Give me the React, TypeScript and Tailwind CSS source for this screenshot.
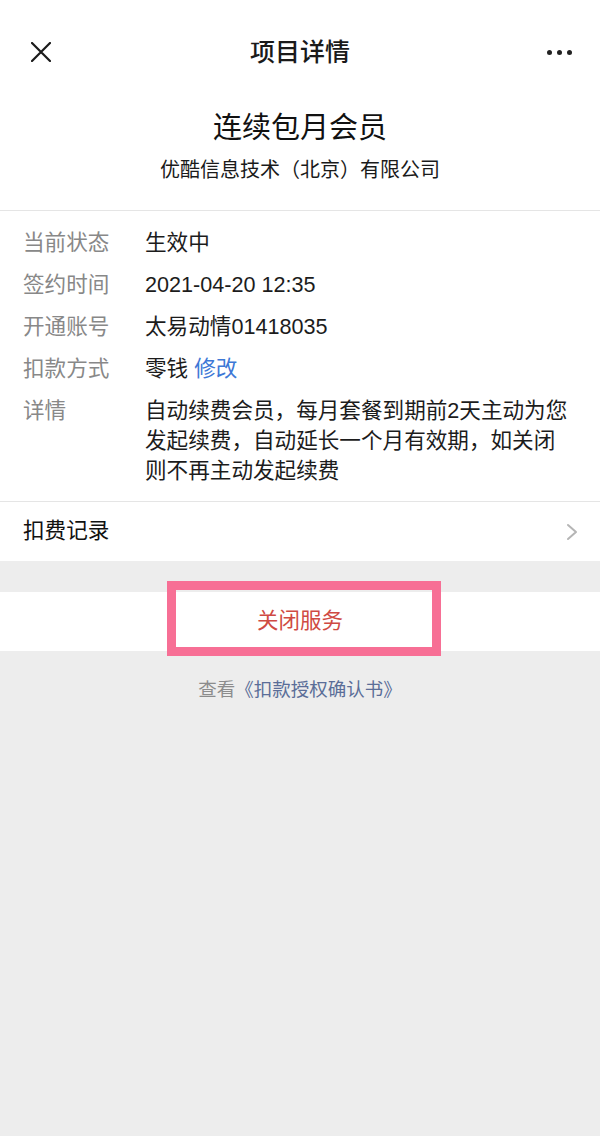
import React from "react";

const font = { fontFamily: '"Liberation Sans", "Noto Sans CJK SC", sans-serif' };

function Row({ label, children }: { label: string; children: React.ReactNode }) {
  return (
    <div className="flex">
      <div className="w-[122px] shrink-0 text-[#888888]">{label}</div>
      <div className="flex-1 text-[#1c1c1c]">{children}</div>
    </div>
  );
}

export default function App() {
  return (
    <div className="min-h-[1136px] w-[600px] bg-[#ededed]" style={font}>
      <div className="bg-white">
        <div className="relative flex h-[104px] items-center justify-center">
          <svg className="absolute left-[31px] top-[42px]" width="20" height="20" viewBox="0 0 20 20">
            <path d="M1 1L19 19M19 1L1 19" stroke="#1a1a1a" strokeWidth="2.2" strokeLinecap="round" />
          </svg>
          <div className="text-[25px] font-medium text-[#1a1a1a] leading-none">项目详情</div>
          <div className="absolute right-[28px] top-[50px] flex gap-[5px]">
            <span className="block h-[5px] w-[5px] rounded-full bg-[#222]" />
            <span className="block h-[5px] w-[5px] rounded-full bg-[#222]" />
            <span className="block h-[5px] w-[5px] rounded-full bg-[#222]" />
          </div>
        </div>
        <div className="flex flex-col items-center pt-[4px] pb-[26px]">
          <div className="text-[29px] leading-[40px] text-[#111]">连续包月会员</div>
          <div className="mt-[8px] text-[20px] leading-[28px] text-[#1a1a1a]">优酷信息技术（北京）有限公司</div>
        </div>
        <div className="h-px bg-[#e5e5e5]" />
        <div className="flex flex-col gap-[12px] px-[23px] pt-[17px] pb-[15px] text-[21.6px] leading-[30px]">
          <Row label="当前状态">生效中</Row>
          <Row label="签约时间">2021-04-20 12:35</Row>
          <Row label="开通账号">太易动情01418035</Row>
          <Row label="扣款方式">
            零钱 <span className="text-[#3d78d6]">修改</span>
          </Row>
          <Row label="详情">
            <div className="whitespace-nowrap">自动续费会员，每月套餐到期前2天主动为您</div>
            <div className="whitespace-nowrap">发起续费，自动延长一个月有效期，如关闭</div>
            <div className="whitespace-nowrap">则不再主动发起续费</div>
          </Row>
        </div>
        <div className="h-px bg-[#e5e5e5]" />
        <div className="flex h-[59px] items-center justify-between pl-[23px] pr-[22px]">
          <div className="text-[21.6px] text-[#111]">扣费记录</div>
          <svg width="12" height="18" viewBox="0 0 12 18">
            <path d="M2 2L10 9L2 16" fill="none" stroke="#b5b5b5" strokeWidth="2" strokeLinecap="round" strokeLinejoin="round" />
          </svg>
        </div>
      </div>
      <div className="h-[31px]" />
      <div className="relative flex h-[59px] items-center justify-center bg-white">
        <div className="text-[21.5px] text-[#cf4a43]">关闭服务</div>
        <div className="pointer-events-none absolute left-[167px] top-[-11px] h-[75px] w-[274px] border-[9px] border-[#f76f95]" />
      </div>
      <div className="mt-[27px] text-center text-[18.5px] leading-[24px]">
        <span className="text-[#8c8c8c]">查看</span>
        <span className="text-[#5a6d98]">《扣款授权确认书》</span>
      </div>
    </div>
  );
}
